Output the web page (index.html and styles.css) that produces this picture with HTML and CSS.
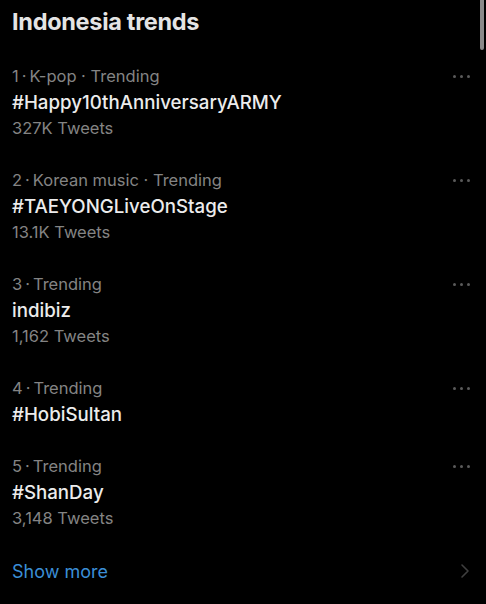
FILE: index.html
```html
<!DOCTYPE html>
<html>
<head>
<meta charset="utf-8">
<link rel="stylesheet" href="styles.css">
</head>
<body>
<div class="page">
  <div class="scrollbar"></div>
  <h1 class="heading">Indonesia trends</h1>
  <ul class="trends">
    <li class="trend">
      <div class="trend-text">
        <div class="meta">1<span class="dot">·</span>K-pop · Trending</div>
        <div class="name">#Happy10thAnniversaryARMY</div>
        <div class="count">327K Tweets</div>
      </div>
      <div class="more"><span></span><span></span><span></span></div>
    </li>
    <li class="trend">
      <div class="trend-text">
        <div class="meta">2<span class="dot">·</span>Korean music · Trending</div>
        <div class="name">#TAEYONGLiveOnStage</div>
        <div class="count">13.1K Tweets</div>
      </div>
      <div class="more"><span></span><span></span><span></span></div>
    </li>
    <li class="trend">
      <div class="trend-text">
        <div class="meta">3<span class="dot">·</span>Trending</div>
        <div class="name">indibiz</div>
        <div class="count">1,162 Tweets</div>
      </div>
      <div class="more"><span></span><span></span><span></span></div>
    </li>
    <li class="trend">
      <div class="trend-text">
        <div class="meta">4<span class="dot">·</span>Trending</div>
        <div class="name">#HobiSultan</div>
      </div>
      <div class="more"><span></span><span></span><span></span></div>
    </li>
    <li class="trend">
      <div class="trend-text">
        <div class="meta">5<span class="dot">·</span>Trending</div>
        <div class="name">#ShanDay</div>
        <div class="count">3,148 Tweets</div>
      </div>
      <div class="more"><span></span><span></span><span></span></div>
    </li>
  </ul>
  <div class="show-more">
    <span class="show-more-label">Show more</span>
    <svg class="chevron" width="10" height="16" viewBox="0 0 10 16"><path d="M2 2 L8 8 L2 14" fill="none" stroke="#3f3f3f" stroke-width="1.6" stroke-linecap="round" stroke-linejoin="round"/></svg>
  </div>
</div>
</body>
</html>
```
FILE: styles.css
```css
html, body {
  margin: 0;
  padding: 0;
  background: #000;
}
body {
  font-family: Inter, "Noto Sans", sans-serif;
  color: #e7e7e7;
  width: 486px;
  height: 604px;
  overflow: hidden;
}
.page {
  position: relative;
  padding: 0 16px 0 12px;
}
.scrollbar {
  position: absolute;
  right: 2px;
  top: 0;
  width: 4px;
  height: 50px;
  background: #8a8a8a;
  border-radius: 0 0 2px 2px;
}
.heading {
  margin: 0;
  height: 50px;
  line-height: 44px;
  font-size: 23.5px;
  font-weight: 700;
  color: #e4e4e4;
  letter-spacing: -0.3px;
}
.trends {
  list-style: none;
  margin: 0;
  padding: 0;
}
.trend {
  display: flex;
  justify-content: space-between;
  align-items: flex-start;
  padding: 13px 0;
}
.meta, .count {
  font-size: 16.5px;
  line-height: 26px;
  color: #848484;
}
.dot {
  margin: 0 3px;
}
.name {
  font-size: 18.7px;
  line-height: 26px;
  font-weight: 500;
  color: #ececec;
  position: relative;
  top: 1px;
}
.more {
  display: flex;
  gap: 4px;
  margin-top: 12px;
}
.more span {
  width: 3px;
  height: 3px;
  border-radius: 50%;
  background: #5a5a5a;
}
.show-more {
  display: flex;
  justify-content: space-between;
  align-items: center;
  padding-top: 14px;
  height: 26px;
}
.show-more-label {
  font-size: 18px;
  color: #3b8ed6;
}
.chevron {
  margin-right: 0;
}
```
